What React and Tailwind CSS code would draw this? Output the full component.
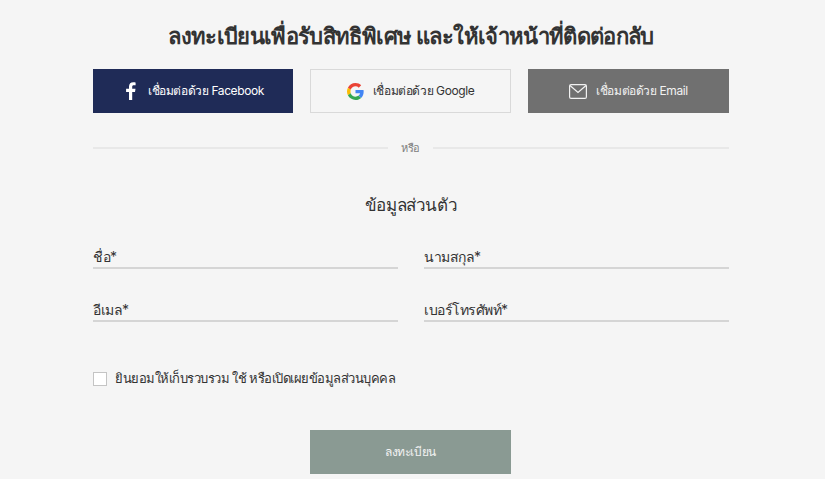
import React from 'react';

const FONT = "font-['Inter','Noto_Sans','Noto_Sans_CJK_SC',sans-serif]";

// Colored Google "G" mark
const GoogleIcon = () => (
  <svg width="17" height="17" viewBox="0 0 48 48">
    <path fill="#EA4335" d="M24 9.500c3.500 0 6.700 1.200 9.200 3.600l6.900-6.900C35.900 2.400 30.400 0 24 0 14.600 0 6.500 5.400 2.600 13.200l8 6.200C12.500 13.700 17.800 9.500 24 9.500z" />
    <path fill="#4285F4" d="M47 24.500c0-1.600-.2-3.100-.4-4.500H24v9h12.900c-.6 3-2.200 5.400-4.700 7.100l7.700 6c4.500-4.200 7.100-10.300 7.100-17.600z" />
    <path fill="#FBBC05" d="M10.600 28.600c-.5-1.400-.8-3-.8-4.600s.3-3.200.8-4.600l-8-6.200C.9 16.500 0 20.100 0 24s.9 7.500 2.600 10.800l8-6.200z" />
    <path fill="#34A853" d="M24 48c6.500 0 11.900-2.100 15.900-5.800l-7.700-6c-2.200 1.400-4.900 2.300-8.200 2.300-6.200 0-11.500-4.200-13.400-9.900l-8 6.200C6.500 42.600 14.600 48 24 48z" />
  </svg>
);

const FacebookIcon = () => (
  <svg width="11" height="18" viewBox="0 0 11 18">
    <path fill="#fff" d="M7.200 18V10h2.800l.5-3.200H7.200V4.900c0-.9.300-1.600 1.700-1.600h1.700V.4C10.300.3 9.300.2 8.200.2 5.700.2 4 1.700 4 4.500v2.300H1.100V10H4v8h3.200z" />
  </svg>
);

const MailIcon = () => (
  <svg width="18" height="15" viewBox="0 0 18 15" fill="none" stroke="#f2f2f2" strokeWidth="1.200">
    <rect x="0.600" y="0.600" width="16.800" height="13.800" rx="1.500" />
    <path d="M1 1.500l8 7 8-7" />
  </svg>
);

const SocialButton = ({ className, icon, label }) => (
  <button className={`h-11 flex items-center justify-center text-xs tracking-[-0.4px] ${className}`}>
    {icon}
    <span>{label}</span>
  </button>
);

const Field = ({ label }) => (
  <div className="h-[26px] flex items-end border-b-2 border-[#d5d5d5] text-sm tracking-[-0.5px] text-[#333]">
    {label}
  </div>
);

const App = () => {
  return (
    <div className={`w-[825px] h-[479px] overflow-hidden bg-[#f5f5f5] ${FONT}`}>
      <div className="w-[636px] ml-[93px]">
        <h1 className="h-[69px] pt-1 flex items-center justify-center text-[22px] tracking-[-0.65px] font-semibold text-[#333]">
          ลงทะเบียนเพื่อรับสิทธิพิเศษ และให้เจ้าหน้าที่ติดต่อกลับ
        </h1>

        <div className="grid grid-cols-[200px_201px_201px] gap-[17px]">
          <SocialButton className="gap-[12px] pl-[3px] bg-[#1f2b57] text-white" icon={<FacebookIcon />} label="เชื่อมต่อด้วย Facebook" />
          <SocialButton className="gap-[9px] border border-[#d9d9d9] text-[#333]" icon={<GoogleIcon />} label="เชื่อมต่อด้วย Google" />
          <SocialButton className="gap-[9px] bg-[#707070] text-[#f2f2f2]" icon={<MailIcon />} label="เชื่อมต่อด้วย Email" />
        </div>

        <div className="mt-[26px] h-[18px] flex items-center gap-[13px] text-[11px] tracking-[-0.3px] text-[#808080]">
          <div className="flex-1 h-0.5 bg-[#e8e8e8]" />
          <span>หรือ</span>
          <div className="w-[296px] h-0.5 bg-[#e8e8e8]" />
        </div>

        <h2 className="mt-[37px] h-[24px] flex items-center justify-center text-[17px] tracking-[-0.4px] font-medium text-[#333]">
          ข้อมูลส่วนตัว
        </h2>

        <div className="mt-[25px] grid grid-cols-2 gap-x-[26px] gap-y-[27px]">
          <Field label="ชื่อ*" />
          <Field label="นามสกุล*" />
          <Field label="อีเมล*" />
          <Field label="เบอร์โทรศัพท์*" />
        </div>

        <label className="mt-[47px] flex items-center gap-[8px] text-[13px] tracking-[-0.5px] text-[#333]">
          <span className="w-[14px] h-[14px] border border-[#c4c4c4] bg-white" />
          ยินยอมให้เก็บรวบรวม ใช้ หรือเปิดเผยข้อมูลส่วนบุคคล
        </label>

        <button className="block mt-[41px] ml-[217px] w-[201px] h-11 bg-[#8a9a93] text-[#f2f2f2] text-xs tracking-[-0.4px]">
          ลงทะเบียน
        </button>
      </div>
    </div>
  );
};

export default App;
